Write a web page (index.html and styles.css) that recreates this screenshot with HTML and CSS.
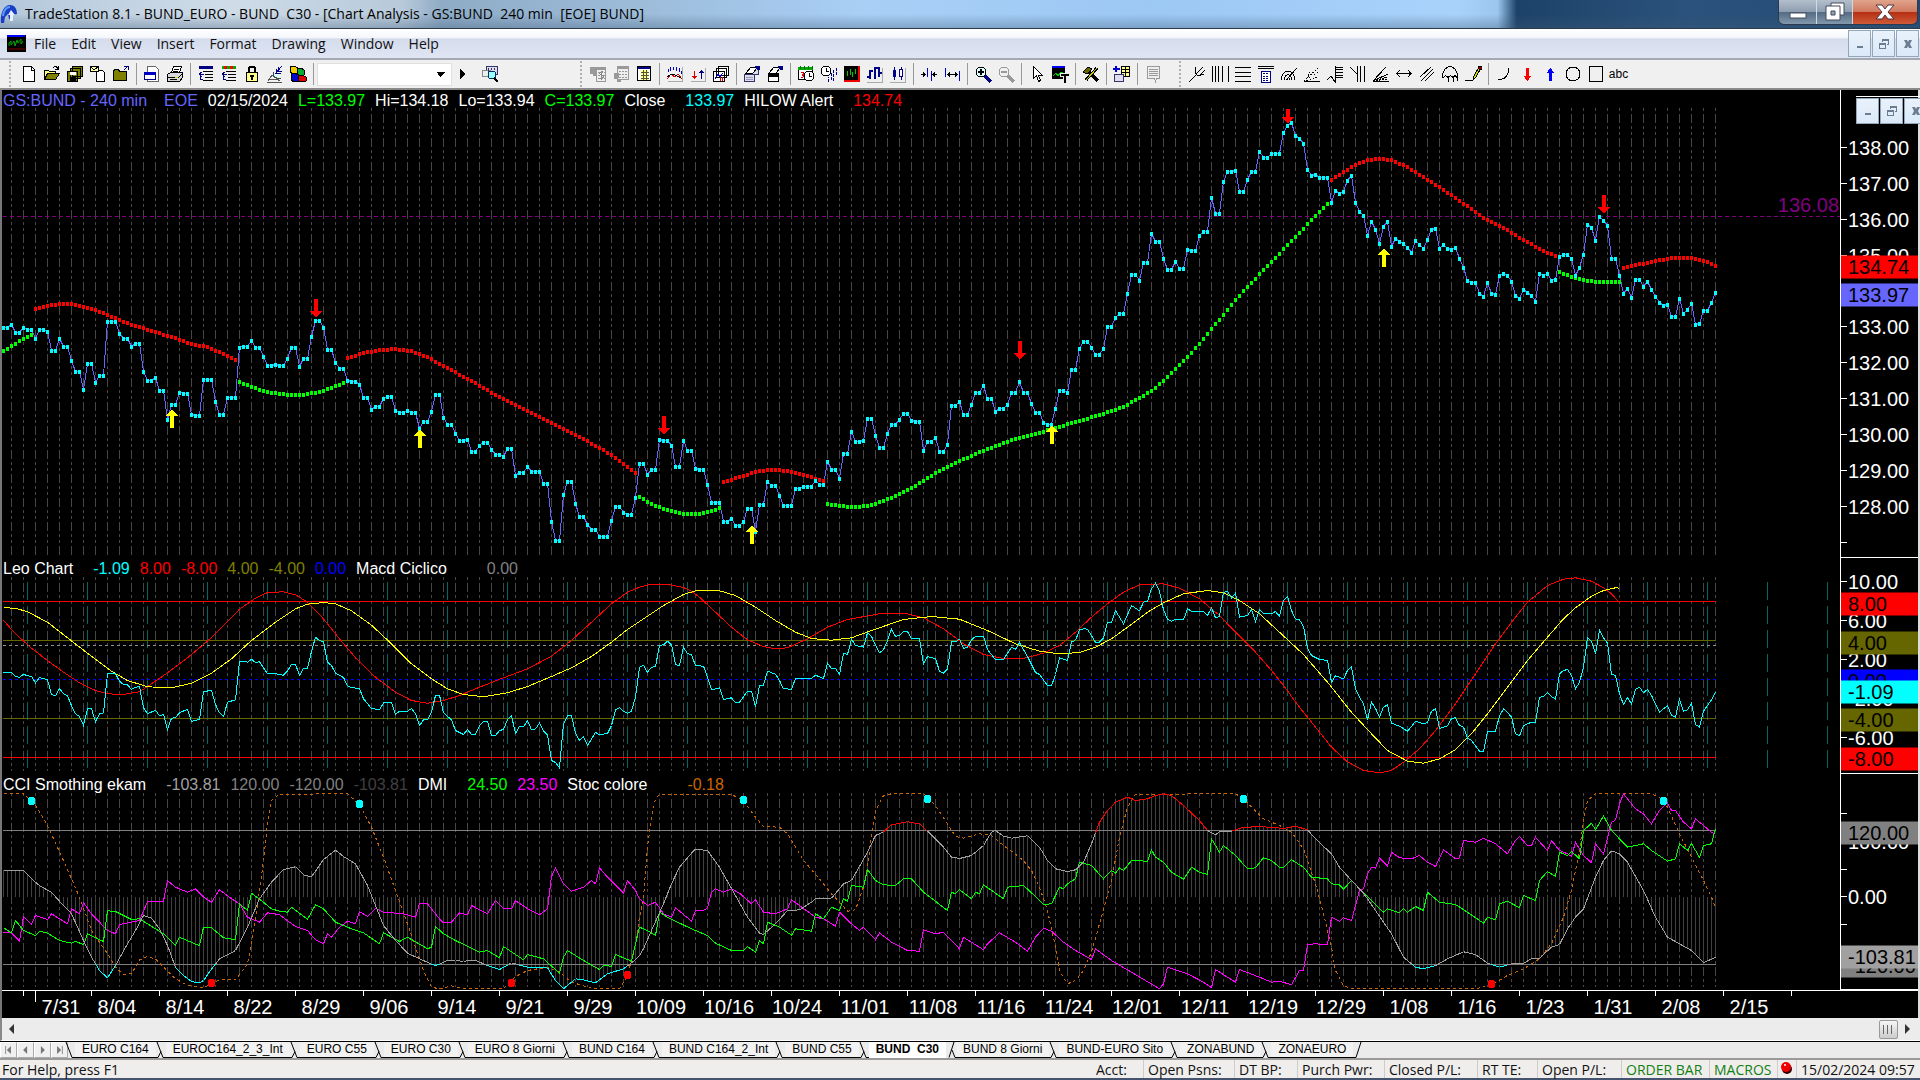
FILE: index.html
```html
<!DOCTYPE html>
<html lang="en">
<head>
    <meta charset="UTF-8">
    <meta name="viewport" content="width=device-width, initial-scale=1.0">
    <title>TradeStation 8.1 - BUND_EURO</title>
    <link rel="stylesheet" href="styles.css">
</head>
<body>

<header class="titlebar">
    <svg class="app-logo" viewBox="0 0 18 20"><path d="M1 19C0 9 4 1 10 1c5 0 7 4 7 9l-4 1-1 5-3-1-1-5-3 3-1 6z" fill="#1a3fc4"/><path d="M3 12C4 5 7 3 10 3" stroke="#5f9bff" stroke-width="2" fill="none"/><path d="M11 6l4 5h-2v6h-3v-6H8z" fill="#e8f0ff"/></svg>
    <h1 class="title">TradeStation 8.1 - BUND_EURO - BUND&nbsp; C30 - [Chart Analysis - GS:BUND&nbsp; 240 min&nbsp; [EOE] BUND]</h1>
    <div class="caption-buttons">
        <button class="cap cap-min" aria-label="Minimize"><svg viewBox="0 0 20 20"><rect x="2" y="11" width="16" height="5" fill="#fff" stroke="#444b5c"/></svg></button>
        <button class="cap cap-max" aria-label="Restore"><svg viewBox="0 0 20 20"><path d="M6 1h13v12H6z" fill="#fff" stroke="#444b5c"/><path d="M1 4h14v14H1z" fill="#fff" stroke="#444b5c"/><path d="M6 9h4v4H6z" fill="#8ea3b5" stroke="#444b5c"/></svg></button>
        <button class="cap cap-close" aria-label="Close"><svg viewBox="0 0 20 20"><path d="M1 3h6l3 4 3-4h6l-6 7 6 7h-6l-3-4-3 4H1l6-7z" fill="#fff" stroke="#4a3540"/></svg></button>
    </div>
</header>

<nav class="menubar">
    <svg class="doc-icon" viewBox="0 0 19 17"><path d="M0 0h19v17H0z" fill="#000"/><path d="M0 0h18v2H0z" fill="#00f"/><path d="M1 14h17" stroke="#800"/><path d="M2 11V8l2-2v4l3-4 1 5 2-6 1 3 3-4v5l2-3" stroke="#0a0" fill="none"/></svg>
    <a href="#">File</a>
    <a href="#">Edit</a>
    <a href="#">View</a>
    <a href="#">Insert</a>
    <a href="#">Format</a>
    <a href="#">Drawing</a>
    <a href="#">Window</a>
    <a href="#">Help</a>
    <div class="mdi">
        <button aria-label="Minimize chart"><svg viewBox="0 0 10 10"><path d="M2 7h6v2H2z"/></svg></button>
        <button aria-label="Restore chart"><svg viewBox="0 0 10 10"><path d="M3 0h7v6H8V5h1V2H4v1H3zM0 4h7v6H0zM1 6v3h5V6z" fill-rule="evenodd"/></svg></button>
        <button aria-label="Close chart"><svg viewBox="0 0 10 10"><path d="M1 1h3l1 2 1-2h3L7 5l2 4H6L5 7 4 9H1l2-4z"/></svg></button>
    </div>
</nav>

<div class="toolbar">
    <i class="grip"></i>
    <button aria-label="New"><svg viewBox="0 0 18 18"><path d="M3.5 1.5h8l3 3v12h-11z" fill="#fff" stroke="#000"/><path d="M11 2v3h3" stroke="#000" fill="none"/></svg></button>
    <button aria-label="Open"><svg viewBox="0 0 18 18"><path d="M1.5 14.5v-9h4l1 1h6v2" fill="#ffff80" stroke="#000"/><path d="M1.5 14.5l3-6h12l-4 6z" fill="#808000" stroke="#000"/><path d="M10 3c2-2 4-2 5 1M15 1v3h-3" stroke="#000" fill="none"/></svg></button>
    <button aria-label="Save all"><svg viewBox="0 0 18 18"><path d="M6.5 1.5h10v10h-10zM4.5 3.5h10v10h-10zM1.5 6.5h10v10h-10z" fill="#808000" stroke="#000"/><path d="M4 7h6v3H4z" fill="#fff"/><path d="M4 12h6v4H4z" fill="#000"/></svg></button>
    <button aria-label="Import"><svg viewBox="0 0 18 18"><path d="M7.5 5.5h6l2 2v9h-8z" fill="#fff" stroke="#000"/><path d="M1.5 1.5h8v5h-8z" fill="#ffffb0" stroke="#000"/><path d="M2 2l3 3 4-3" stroke="#000" fill="none"/></svg></button>
    <button aria-label="Close workspace"><svg viewBox="0 0 18 18"><path d="M1.5 15.5v-9l1-2h4l1 2h7v9z" fill="#808000" stroke="#000"/><path d="M16 5V1h-4M16 1l-4 4" stroke="#000080" fill="none"/></svg></button>
    <i class="sep"></i>
    <button aria-label="New window"><svg viewBox="0 0 18 18"><path d="M4.5 1.5h8l3 3v12h-11z" fill="#fff" stroke="#666"/><path d="M1.5 7.5h11v7h-11z" fill="#fff" stroke="#000080"/><path d="M1 7h12v3H1z" fill="#0000c0"/></svg></button>
    <button aria-label="Print"><svg viewBox="0 0 18 18"><path d="M5.5 7.5l2-6h8l-2 6z" fill="#fff" stroke="#000"/><path d="M1.5 9.5l3-2h12v5l-3 4h-12z" fill="#d8d8d8" stroke="#000"/><path d="M2 12h11l3-3M4 14h7M8 4h5M7 6h5" stroke="#000" fill="none"/><path d="M9 12h3v1H9z" fill="#dd0"/></svg></button>
    <i class="sep"></i>
    <button aria-label="Symbol list"><svg viewBox="0 0 18 18"><path d="M2 1h14v3H2z" fill="#000080"/><path d="M6 6.5h10M8 9.5h8M8 12.5h8M6 15.5h10" stroke="#000"/><path d="M7 9H3v5h3M5 7L2 9l3 3" stroke="#000080" fill="none"/></svg></button>
    <button aria-label="Strategy list"><svg viewBox="0 0 18 18"><path d="M2 1h14v3H2z" fill="#0a0"/><path d="M4 1h3v3H4zM10 1h3v3h-3z" fill="#f00"/><path d="M6 6.5h10M8 9.5h8M8 12.5h8M6 15.5h10" stroke="#000"/><path d="M7 9H3v5h3M5 7L2 9l3 3" stroke="#000080" fill="none"/></svg></button>
    <button aria-label="Lock"><svg viewBox="0 0 18 18"><path d="M6 8V4c0-3 6-3 6 0v4" fill="none" stroke="#000" stroke-width="2"/><path d="M3.5 7.5h11v9h-11z" fill="#ff8" stroke="#000"/><path d="M7 10h4v2H7zM8 12h2v3H8z" fill="#000"/></svg></button>
    <button aria-label="Satellite"><svg viewBox="0 0 18 18"><path d="M2 16l4-6 8 6M4 14h9M1 17h15" stroke="#555" fill="none"/><path d="M7 7c0 6 5 7 8 6" fill="#cff" stroke="#444"/><path d="M9 9l7-8M12 2v4h4M10 4v4h5" stroke="#008" fill="none"/></svg></button>
    <button aria-label="Blocks"><svg viewBox="0 0 18 18"><path d="M1 2l4-1 4 2v5l-4 1-4-2z" fill="#ec0" stroke="#000"/><path d="M8 4l4-1 3 2v5l-4 1-3-2z" fill="#0a3" stroke="#000"/><path d="M2 9l4-1 3 2v6l-4 1-3-2z" fill="#00c" stroke="#000"/><path d="M9 11l4-1 4 2v4l-4 1-4-1z" fill="#d00" stroke="#000"/></svg></button>
    <i class="sep"></i>
    <select class="symbol-box" aria-label="Symbol"><option></option></select>
    <button class="go" aria-label="Go"><svg viewBox="0 0 6 10"><path d="M0 0l5 5-5 5z"/></svg></button>
    <button class="lookup" aria-label="Lookup"><svg viewBox="0 0 18 18"><path d="M5.5 1.5h11v8h-11z" fill="#dde" stroke="#336"/><path d="M1.5 5.5h8v6h-8z" fill="#eee" stroke="#888"/><path d="M7 3v5M10 3v2M13 3v2" stroke="#336"/><circle cx="11" cy="10" r="4" fill="#9ff" stroke="#036"/><path d="M13 13l4 4" stroke="#000" stroke-width="2"/></svg></button>
    <i class="grip grip-mid"></i>
    <button aria-label="Dollar grid" disabled><svg viewBox="0 0 18 18"><path d="M1 2h7v9H4V9H1z" fill="#999"/><path d="M7.5 2.5h9v14h-9z" fill="#eee" stroke="#999"/><path d="M7 2h10v3H7zM1 2h6v2H1z" fill="#999"/><path d="M9 7.5h7M9 10.5h7M9 13.5h7" stroke="#999" stroke-dasharray="2 1"/><path d="M14 7c-4-1-4 3-1 3s2 4-2 3M12.500 6v9" stroke="#888" fill="none"/></svg></button>
    <button aria-label="Time grid" disabled><svg viewBox="0 0 18 18"><path d="M2 8h7v9H5v-3H2z" fill="#999"/><path d="M5.5 1.5h11v13h-11z" fill="#eee" stroke="#999"/><path d="M5 1h12v3H5z" fill="#999"/><path d="M7 6.5h9M7 9.5h9M7 12.5h9" stroke="#999" stroke-dasharray="2 1"/><path d="M2 8h5v5H2z" fill="#999"/></svg></button>
    <button aria-label="Calendar"><svg viewBox="0 0 18 18"><path d="M2.5 1.5h13v14h-13z" fill="#fff" stroke="#000"/><path d="M3 2h12v2H3z" fill="#008"/><path d="M6 5h7v10H6z" fill="#ff8"/><path d="M6 7.5h8M6 10.5h8M6 13.5h8M8.5 5v10M11.5 5v10" stroke="#553"/></svg></button>
    <i class="sep"></i>
    <button aria-label="Indicator"><svg viewBox="0 0 18 18"><path d="M2 16.5h14.500V2" stroke="#aaa" fill="none"/><path d="M2.500 7V4M4.500 6V2M7.500 5V2M10.500 6V2M13.500 7V3M15.500 9V6" stroke="#00c"/><path d="M1 14l4-5 4 3 3-3 4 5" stroke="#d00" fill="none"/><path d="M1 12l5-3 3 1 6 3" stroke="#000" fill="none"/></svg></button>
    <button aria-label="Strategy"><svg viewBox="0 0 18 18"><path d="M2 16.5h14.500V3" stroke="#aaa" fill="none"/><path d="M5 6h1v5h2l-3 3-2-3h2z" fill="#d00"/><path d="M12 14h1V8h2l-3-3-2 3h2z" fill="#008"/></svg></button>
    <button aria-label="Workspaces"><svg viewBox="0 0 18 18"><path d="M6.5 1.5h10v9h-10zM4.5 3.5h10v9h-10zM1.5 6.5h11v10h-11z" fill="#fff" stroke="#000"/><path d="M3 14l3-5 2 3 3-4" stroke="#00c" fill="none"/><path d="M8.5 12v4M10.5 12v4" stroke="#d00"/></svg></button>
    <i class="sep"></i>
    <button aria-label="Format window"><svg viewBox="0 0 18 18"><path d="M8.5 3.5h7v6h-7zM1.5 9.5h10v7h-10z" fill="#dde" stroke="#336"/><path d="M3 8l5-6 6 1-4 5z" fill="#fff" stroke="#000"/><path d="M12 1h5v4h-3" fill="#008"/><path d="M3 12.5h7M3 14.5h7" stroke="#99b"/></svg></button>
    <button aria-label="Format chart"><svg viewBox="0 0 18 18"><path d="M2.5 8.5h10v8h-10z" fill="#fff" stroke="#000"/><path d="M3 9h10v3H3z" fill="#000"/><path d="M3 8l5-6 6 1-4 5z" fill="#fff" stroke="#000"/><path d="M12 1h5v4h-3" fill="#008"/></svg></button>
    <i class="sep"></i>
    <button aria-label="Sessions"><svg viewBox="0 0 18 18"><path d="M1.5 3.5h14v11h-14z" fill="#fff" stroke="#000"/><path d="M1 2h15v3H1z" fill="#0a0"/><path d="M3.5 1v3M7.5 1v3M11.5 1v3M15.5 1v3" stroke="#060"/><path d="M4 8c3-2 3 2 1 2 3 0 2 3-1 2" stroke="#d00" fill="none"/><circle cx="12" cy="11" r="5" fill="#fff" stroke="#000"/><path d="M12 8v3h3" stroke="#000" fill="none"/></svg></button>
    <button aria-label="Time bars"><svg viewBox="0 0 18 18"><circle cx="6" cy="6" r="5" fill="#fff" stroke="#000"/><path d="M6 3v3h3" stroke="#000" fill="none"/><path d="M8.5 17v-5M11.5 15V8M13.5 16V5M16.5 10V3" stroke="#008" stroke-dasharray="3 1"/></svg></button>
    <button aria-label="Chart colours"><svg viewBox="0 0 18 18"><path d="M1 1h15v15H1z"/><path d="M4.500 11V6M7.500 10V4M9.500 12V7M12.500 9V4" stroke="#0c0"/><path d="M16 1v15H1" stroke="#e00" stroke-width="2" fill="none"/></svg></button>
    <button aria-label="OHLC bars"><svg viewBox="0 0 18 18"><path d="M1 17h15V3" stroke="#aaa" fill="none"/><path d="M4 14V5M1 12h3M4 6h3M9 14V2M9 3h4v9M13 8h3" stroke="#008" stroke-width="2" fill="none"/></svg></button>
    <button aria-label="Candles"><svg viewBox="0 0 18 18"><path d="M1 17h15V3" stroke="#aaa" fill="none"/><path d="M5.500 2v13M12 2v13" stroke="#008"/><path d="M4 5h3v7H4z" fill="#008"/><path d="M10.5 4.5h3v7h-3z" fill="#fff" stroke="#008"/></svg></button>
    <i class="sep"></i>
    <button aria-label="Decrease spacing"><svg viewBox="0 0 18 18"><path d="M7.5 3v9M11.5 6v10" stroke="#00c"/><path d="M1 9.5h4M17 9.5h-4" stroke="#000"/><path d="M3 7l3 2.500-3 2.500zM15 7l-3 2.500 3 2.500z"/></svg></button>
    <button aria-label="Increase spacing"><svg viewBox="0 0 18 18"><path d="M2.5 3v9M16.5 6v10" stroke="#00c"/><path d="M5 9.5h9" stroke="#000"/><path d="M7 7L4 9.500l3 2.500zM12 7l3 2.500-3 2.500z"/></svg></button>
    <i class="sep"></i>
    <button aria-label="Zoom in"><svg viewBox="0 0 18 18"><circle cx="7" cy="7" r="5" fill="#dff" stroke="#000"/><path d="M4 7h6M7 4v6" stroke="#000" stroke-width="2"/><path d="M11 11l6 6" stroke="#000080" stroke-width="3"/></svg></button>
    <button aria-label="Zoom out" disabled><svg viewBox="0 0 18 18"><circle cx="7" cy="7" r="5" fill="none" stroke="#999"/><path d="M4 7h6" stroke="#999" stroke-width="2"/><path d="M11 11l6 6" stroke="#999" stroke-width="3"/></svg></button>
    <i class="sep"></i>
    <button aria-label="Pointer"><svg viewBox="0 0 18 18"><path d="M5.5 1.5v12l3-3 2 6 2-1-2-5h4z" fill="#fff" stroke="#000"/></svg></button>
    <button aria-label="Data tip"><svg viewBox="0 0 18 18"><path d="M1 1h13v13H1z"/><path d="M1 1h13v2H1z" fill="#00f"/><path d="M2 11l3-3 2 3 3-4 3 2" stroke="#0c0" fill="none"/><path d="M9 8h9v3h-3v7h-3v-7H9z" fill="#000" stroke="#eee"/></svg></button>
    <i class="sep"></i>
    <button aria-label="Tools"><svg viewBox="0 0 18 18"><path d="M15 3L4 15M5 5l11 11" stroke="#000" stroke-width="3"/><path d="M15 3L4 15" stroke="#cc0"/><path d="M1 7l5-5 4 2-5 5z" fill="#660" stroke="#000"/></svg></button>
    <i class="sep"></i>
    <button aria-label="Add"><svg viewBox="0 0 18 18"><path d="M8.5 1.5h8v10h-8z" fill="#ff8" stroke="#000"/><path d="M9 4.5h7M9 7.5h7M12.5 2v9" stroke="#000"/><path d="M1.5 9.5h9v7h-9z" fill="#dde" stroke="#336"/><path d="M0 4h7M3 1v6" stroke="#00c" stroke-width="2"/></svg></button>
    <i class="sep"></i>
    <button aria-label="Notes" disabled><svg viewBox="0 0 18 18"><path d="M3.5 1.5h12v12h-3l-1 3-1-3h-7z" fill="#eee" stroke="#999"/><path d="M5 4.5h9M5 6.5h9M5 8.5h9M5 10.5h9" stroke="#999"/></svg></button>
    <i class="grip grip-right"></i>
    <button aria-label="Pitchfork"><svg viewBox="0 0 18 18" class="line"><path d="M1 17l8-8M8 2l-1 6 3 3 6-2M8 9l7-7M11 11l6-6"/></svg></button>
    <button aria-label="Cycle lines"><svg viewBox="0 0 18 18" class="line"><path d="M1.5 1v16M4.5 1v16M7.5 1v16M11.5 1v16M17.5 1v16"/></svg></button>
    <button aria-label="Horizontal lines"><svg viewBox="0 0 18 18" class="line"><path d="M1 2.5h16M1 7.5h16M1 11.5h16M1 16.5h16"/></svg></button>
    <button aria-label="Calculator lines"><svg viewBox="0 0 18 18" class="line"><path d="M1 1.5h16M1 3.5h16"/><path d="M4.5 6.5h9v11h-9z" fill="#fff" stroke="#008"/><path d="M6 8.5h6M6 11.5h6M6 13.5h6M6 15.5h6" stroke="#008" stroke-dasharray="2 1"/></svg></button>
    <button aria-label="Speed arcs"><svg viewBox="0 0 18 18" class="line"><path d="M1 15c1-12 13-12 14 0M4 15c1-7 7-7 8 0M6 15L17 3M7 15c0-3 3-3 3 0"/></svg></button>
    <button aria-label="Gann fan"><svg viewBox="0 0 18 18" class="line"><path d="M1 16.5h16"/><path d="M1 16L16 2M1 16l15-9M1 16l15-4M3 16L8 5" stroke-dasharray="1 2"/></svg></button>
    <button aria-label="Retracement"><svg viewBox="0 0 18 18" class="line"><path d="M1 15l4-4 4 6V1M10 2.5h7M10 4.5h7M10 7.5h7M10 10.5h7M10 12.5h7"/></svg></button>
    <button aria-label="Time extension"><svg viewBox="0 0 18 18" class="line"><path d="M1 2l7 7V1M8.5 4v13M11.5 1v16M15.5 1v16"/></svg></button>
    <button aria-label="Fan"><svg viewBox="0 0 18 18" class="line"><path d="M1 16L14 2M1 16.5h16M1 16l15-7"/><path d="M1 16l15-4M1 16l15-2" stroke-dasharray="2 1"/></svg></button>
    <button aria-label="Extend"><svg viewBox="0 0 18 18" class="line"><path d="M2 8.5h14M5 5L2 8.5 5 12M13 5l3 3.5-3 3.5"/></svg></button>
    <button aria-label="Channels"><svg viewBox="0 0 18 18" class="line"><path d="M2 12L13 2M3 16L15 4M7 16l9-9"/></svg></button>
    <button aria-label="Cycle arc"><svg viewBox="0 0 18 18" class="line"><path d="M1 16C0-3 18-3 17 16M2 13c2-3 4-3 5 0 1-3 4-3 5 0 1-3 3-3 4 0M7 13v4M12 13v4"/></svg></button>
    <button aria-label="Pencil"><svg viewBox="0 0 18 18" class="line"><path d="M1 15.5h8"/><path d="M9 15l1-4 5-9 2 1-5 9z" fill="#dd0"/><path d="M14 1h4v3h-3z" fill="#800"/></svg></button>
    <i class="sep"></i>
    <button aria-label="Arc"><svg viewBox="0 0 18 18" class="line"><path d="M3 14.5c7 0 10-3 11-11"/></svg></button>
    <button aria-label="Down arrow"><svg viewBox="0 0 18 18"><path d="M8 3h3v8h2l-3 5h-1l-3-5h2z" fill="#f00"/></svg></button>
    <button aria-label="Up arrow"><svg viewBox="0 0 18 18"><path d="M8 16h3V8h2l-3-5H9L6 8h2z" fill="#00f"/></svg></button>
    <button aria-label="Ellipse"><svg viewBox="0 0 18 18" class="line"><circle cx="9" cy="9" r="7"/></svg></button>
    <button aria-label="Rectangle"><svg viewBox="0 0 18 18" class="line"><path d="M2.5 1.5h13v15h-13z"/></svg></button>
    <button class="text-tool" aria-label="Text">abc</button>
</div>

<main class="chart">
    <div class="mdi mdi-chart">
        <button aria-label="Minimize"><svg viewBox="0 0 10 10"><path d="M2 7h6v2H2z"/></svg></button>
        <button aria-label="Restore"><svg viewBox="0 0 10 10"><path d="M3 0h7v6H8V5h1V2H4v1H3zM0 4h7v6H0zM1 6v3h5V6z" fill-rule="evenodd"/></svg></button>
        <button aria-label="Close"><svg viewBox="0 0 10 10"><path d="M1 1h3l1 2 1-2h3L7 5l2 4H6L5 7 4 9H1l2-4z"/></svg></button>
    </div>

    <section class="panel">
        <div class="plot">
            <svg id="price" viewBox="0 0 1838 468" preserveAspectRatio="none"></svg>
            <p class="legend">
                <span class="violet">GS:BUND - 240 min</span>
                <span class="violet wide">EOE</span>
                <span>02/15/2024</span>
                <span class="lime">L=133.97</span>
                <span>Hi=134.18</span>
                <span>Lo=133.94</span>
                <span class="lime">C=133.97</span>
                <span>Close</span>
                <span class="cyan far">133.97</span>
                <span>HILOW Alert</span>
                <span class="red far">134.74</span>
            </p>
            <span class="level-label">136.08</span>
        </div>
        <div class="axis" id="priceAxis"></div>
    </section>

    <section class="panel">
        <div class="plot">
            <svg id="leo" viewBox="0 0 1838 216" preserveAspectRatio="none"></svg>
            <p class="legend">
                <span>Leo Chart</span>
                <span class="cyan far">-1.09</span>
                <span class="red">8.00</span>
                <span class="red">-8.00</span>
                <span class="olive">4.00</span>
                <span class="olive">-4.00</span>
                <span class="blue">0.00</span>
                <span>Macd Ciclico</span>
                <span class="gray farther">0.00</span>
            </p>
        </div>
        <div class="axis" id="leoAxis"></div>
    </section>

    <section class="panel">
        <div class="plot">
            <svg id="cci" viewBox="0 0 1838 216" preserveAspectRatio="none"></svg>
            <p class="legend">
                <span>CCI Smothing ekam</span>
                <span class="silver far">-103.81</span>
                <span class="gray">120.00</span>
                <span class="gray">-120.00</span>
                <span class="dim">-103.81</span>
                <span>DMI</span>
                <span class="lime far">24.50</span>
                <span class="magenta">23.50</span>
                <span>Stoc colore</span>
                <span class="orange farther">-0.18</span>
            </p>
        </div>
        <div class="axis" id="cciAxis"></div>
    </section>

    <div class="dates" id="dates"></div>
</main>

<div class="scrollbar">
    <button aria-label="Scroll left"><svg viewBox="0 0 6 10"><path d="M5 0v10L0 5z"/></svg></button>
    <span class="thumb"></span>
    <button aria-label="Scroll right"><svg viewBox="0 0 6 10"><path d="M0 0v10l5-5z"/></svg></button>
</div>

<nav class="tabs">
    <button class="tab-nav" aria-label="First"><svg viewBox="0 0 10 10"><path d="M1 0h1v10H1zM8 0v10L3 5z"/></svg></button>
    <button class="tab-nav" aria-label="Previous"><svg viewBox="0 0 10 10"><path d="M7 0v10L2 5z"/></svg></button>
    <button class="tab-nav" aria-label="Next"><svg viewBox="0 0 10 10"><path d="M3 0v10l5-5z"/></svg></button>
    <button class="tab-nav" aria-label="Last"><svg viewBox="0 0 10 10"><path d="M8 0h1v10H8zM2 0v10l5-5z"/></svg></button>
    <div class="tab-list" id="tabs"></div>
</nav>

<footer class="statusbar">
    <span class="help">For Help, press F1</span>
    <span class="cell w-acct">Acct:</span>
    <span class="cell w-psns">Open Psns:</span>
    <span class="cell w-dt">DT BP:</span>
    <span class="cell w-purch">Purch Pwr:</span>
    <span class="cell w-closed">Closed P/L:</span>
    <span class="cell w-rt">RT TE:</span>
    <span class="cell w-open">Open P/L:</span>
    <span class="cell on w-order">ORDER BAR</span>
    <span class="cell on w-macros">MACROS</span>
    <span class="cell w-ball"><svg viewBox="0 0 14 14"><circle cx="7" cy="8" r="5" fill="#300"/><circle cx="6" cy="6" r="5" fill="#e00"/><circle cx="5" cy="4" r="1" fill="#fff"/></svg></span>
    <span class="cell w-clock">15/02/2024 09:57</span>
</footer>

<script src="chart.js"></script>
</body>
</html>
```
FILE: styles.css
```css
* {
    box-sizing: border-box;
}

body {
    margin: 0;
    min-height: 100vh;
    display: flex;
    flex-direction: column;
    background: #f0f0f0;
    font-family: "Open Sans", "Noto Sans", sans-serif;
    font-size: 14px;
    color: #111;
    overflow: hidden;
}

button {
    padding: 0;
    border: 0;
    background: none;
    display: flex;
    align-items: center;
    justify-content: center;
}

/* title bar */
.titlebar {
    display: flex;
    align-items: center;
    height: 29px;
    padding-right: 2px;
    border-bottom: 1px solid #2d3a48;
    background:
        linear-gradient(180deg, rgba(255, 255, 255, 0) 50%, rgba(60, 90, 120, 0.35) 100%),
        linear-gradient(90deg, #b4c8dc 0, #cfdce8 12%, #b7c9da 21%, #8fabc6 23%, #9dbddb 34%, #a9cff6 45%, #9cc8f4 60%, #a9d2fb 76%, #9cc6ee 78%, #1d4269 79%, #2b527c 88%, #204872 100%);
}

.app-logo {
    width: 18px;
    height: 20px;
    margin-right: 7px;
}

.title {
    margin: 0;
    font-size: 14px;
    font-weight: 400;
    line-height: 30px;
    color: #000;
    white-space: nowrap;
}

.caption-buttons {
    display: flex;
    align-self: flex-start;
    height: 25px;
    margin-left: auto;
    border: 1px solid #2b3b4d;
    border-top: 0;
    border-radius: 0 0 6px 6px;
    overflow: hidden;
}

.cap {
    width: 38px;
    border-right: 1px solid #d0dae4;
    background: linear-gradient(180deg, #b3bfcc 0, #8f9fb0 48%, #526a83 50%, #8298ad 100%);
}

.cap svg {
    width: 20px;
    height: 20px;
}

.cap-max {
    width: 36px;
}

.cap-close {
    width: 64px;
    border-right: 0;
    background: linear-gradient(180deg, #e0a48c 0, #cf7a60 48%, #b52e12 50%, #cf5a38 100%);
}

/* menu bar */
.menubar {
    display: flex;
    align-items: center;
    height: 29px;
    padding-left: 7px;
    background: linear-gradient(180deg, #fff 0, #f4f6fb 30%, #d5dcec 34%, #dfe5f3 100%);
}

.doc-icon {
    width: 19px;
    height: 17px;
    margin-right: 8px;
}

.menubar a {
    margin-right: 15px;
    color: #111;
    text-decoration: none;
    line-height: 29px;
}

.mdi {
    display: flex;
    gap: 1px;
    align-self: stretch;
    margin-left: auto;
    padding: 1px 1px 1px 0;
}

.mdi button {
    width: 23px;
    border: 1px solid #93a7bb;
    background: linear-gradient(180deg, #e9f2fb, #dbe9f8);
}

.mdi svg {
    width: 10px;
    height: 10px;
    fill: #6b7d90;
}

/* toolbar */
.toolbar {
    display: flex;
    align-items: center;
    height: 32px;
    padding-left: 6px;
    border-top: 2px solid #a5a9b3;
    border-bottom: 2px solid #8a8a8a;
    background: #f0f0f0;
}

.toolbar button {
    width: 23px;
    height: 24px;
    flex: none;
}

.toolbar svg {
    width: 18px;
    height: 18px;
    shape-rendering: crispEdges;
}

.toolbar .line {
    fill: none;
    stroke: #000;
}

.sep {
    flex: none;
    width: 8px;
    height: 22px;
    border-left: 1px solid #999;
    margin-left: 4px;
    margin-right: -4px;
}

.grip {
    flex: none;
    width: 3px;
    height: 26px;
    margin: 0 5px 0 3px;
    border-left: 2px dotted #b0b0b0;
}

.symbol-box {
    appearance: none;
    flex: none;
    width: 135px;
    height: 23px;
    border: 1px solid #e0e0e0;
    border-radius: 0;
    background:
        linear-gradient(45deg, transparent 50%, #000 50%) right 10px center / 5px 5px no-repeat,
        linear-gradient(315deg, transparent 50%, #000 50%) right 5px center / 5px 5px no-repeat,
        #fff;
}

.toolbar .go {
    width: 21px;
}

.toolbar .go svg {
    width: 6px;
    height: 10px;
}

.toolbar .lookup {
    margin-left: 5px;
}

.grip-mid {
    margin-left: 79px;
    margin-right: 3px;
}

.grip-right {
    margin-left: 15px;
    margin-right: 3px;
}

.toolbar .text-tool {
    font: 12px "Liberation Sans", sans-serif;
}

/* chart */
.chart {
    position: relative;
    flex: 1;
    display: grid;
    grid-template-rows: 13fr 6fr 6fr 28px;
    border-left: 2px solid #777;
    border-right: 2px solid #ddd;
    background: #000;
    color: #fff;
    font-family: "Liberation Sans", Arial, sans-serif;
}

.mdi-chart {
    position: absolute;
    z-index: 3;
    top: 6px;
    right: -10px;
    height: 29px;
    border-top: 1px solid #fff;
}

.panel {
    display: flex;
    min-height: 0;
}

.plot {
    position: relative;
    flex: 1;
    min-width: 0;
}

.plot > svg {
    position: absolute;
    width: 100%;
    height: 100%;
    shape-rendering: crispEdges;
    fill: none;
    overflow: visible;
}

.legend {
    position: relative;
    display: flex;
    gap: 10px;
    margin: 0;
    padding: 2px 0 0 1px;
    font-size: 16px;
    line-height: 18px;
    white-space: nowrap;
}

.legend .wide { margin-left: 7px; }
.legend .far { margin-left: 10px; }
.legend .farther { margin-left: 30px; }

.violet { color: #6666ff; }
.lime { color: #00ff00; }
.cyan { color: #00ffff; }
.red { color: #ff0000; }
.olive { color: #808000; }
.blue { color: #0000ff; }
.gray { color: #808080; }
.silver { color: #a0a0a0; }
.dim { color: #404040; }
.magenta { color: #ff00ff; }
.orange { color: #cc6600; }

.level-label {
    position: absolute;
    right: 1px;
    top: 22%;
    font-size: 20px;
    line-height: 24px;
    color: #800080;
}

.axis {
    position: relative;
    width: 78px;
    border-left: 1px solid #fff;
    border-bottom: 1px solid #fff;
    overflow: hidden;
}

.tick {
    position: absolute;
    left: 0;
    width: 6px;
    border-top: 1px solid #fff;
}

.value {
    position: absolute;
    left: 7px;
    margin-top: 1px;
    font-size: 20px;
    line-height: 23px;
    transform: translateY(-50%);
}

.value.tag {
    left: 0;
    width: 100%;
    padding-left: 7px;
    margin-top: 3px;
    color: #000;
}

.dates {
    position: relative;
    display: flex;
    border-top: 1px solid #fff;
    font-size: 20px;
    line-height: 32px;
    padding-left: 21px;
    overflow: hidden;
}

.dates span {
    position: relative;
    flex: none;
    width: 68px;
    padding-right: 16px;
    text-align: center;
}

.dates span::before {
    content: "";
    position: absolute;
    left: 0;
    top: 0;
    height: 5px;
    border-left: 1px solid #fff;
}

.dates .edge {
    width: 12px;
    padding: 0;
}

.dates .month {
    width: 56px;
    padding-right: 4px;
}

.dates .month::before {
    height: 11px;
}

/* scroll bar and workspace tabs */
.scrollbar {
    display: flex;
    align-items: center;
    height: 23px;
    padding: 0 5px 0 2px;
    border-left: 2px solid #888;
    border-bottom: 1px solid #fff;
    background: #ececec;
}

.scrollbar button {
    width: 15px;
    height: 20px;
}

.scrollbar svg {
    width: 6px;
    height: 10px;
    fill: #333;
}

.thumb {
    width: 19px;
    height: 19px;
    margin-left: auto;
    margin-right: 2px;
    padding: 4px 3px;
    border: 1px solid #999;
    border-radius: 2px;
    background:
        linear-gradient(90deg, #666 1px, transparent 1px) 0 0 / 4px 9px repeat-x content-box,
        linear-gradient(180deg, #f6f6f6, #ccc);
}

.tabs {
    display: flex;
    height: 19px;
    border-top: 1px solid #000;
    border-bottom: 2px solid #999;
    background: #ebebeb;
    font: 12px "Liberation Sans", Arial, sans-serif;
}

.tab-nav {
    width: 17px;
    border: 1px solid #aaa;
    border-top-color: #fff;
    border-left-color: #fff;
    background: #f0f0f0;
}

.tab-nav svg {
    width: 9px;
    height: 8px;
    fill: #777;
}

.tab-list {
    display: flex;
    margin-left: -3px;
}

.tab-list svg {
    width: 10px;
    height: 16px;
    flex: none;
}

.tab-list a {
    padding: 0 7px;
    border-bottom: 1px solid #000;
    color: #000;
    line-height: 15px;
    text-decoration: none;
    white-space: pre;
    background: #f2f2f2;
}

.tab-list .active {
    border-bottom-color: #fff;
    background: #fff;
    font-weight: 700;
}

/* status bar */
.statusbar {
    display: flex;
    height: 20px;
    border-bottom: 2px solid #44546e;
    background: #f0eeec;
    line-height: 20px;
    white-space: nowrap;
}

.help {
    flex: 1;
    padding-left: 2px;
}

.cell {
    padding-left: 4px;
    border-left: 1px solid #ccc;
}

.on {
    color: #138013;
}

.w-acct { width: 51px; border-left: 0; }
.w-psns { width: 91px; }
.w-dt { width: 63px; }
.w-purch { width: 87px; }
.w-closed { width: 93px; }
.w-rt { width: 60px; }
.w-open { width: 84px; }
.w-order { width: 88px; }
.w-macros { width: 68px; }
.w-ball { width: 19px; padding-left: 2px; }
.w-clock { width: 124px; }

.cell svg {
    width: 14px;
    height: 14px;
}
```
FILE: chart.js
```js
const NS = 'http://www.w3.org/2000/svg';
const BARS = 429;

// bar index -> x inside the plot
const barX = i => 1 + 4 * i;

function add(svg, tag, attrs) {
    const el = document.createElementNS(NS, tag);
    for (const key in attrs) el.setAttribute(key, attrs[key]);
    svg.appendChild(el);
    return el;
}

// "bar,y bar,y ..." -> [[bar, y], ...]
const parse = text => text.trim().split(/\s+/).map(p => p.split(',').map(Number));

// linear fill between the key bars
function fill(keys) {
    const out = [];
    for (let k = 0; k < keys.length - 1; k++) {
        const [a, ya] = keys[k];
        const [b, yb] = keys[k + 1];
        for (let i = a; i < b; i++) out.push([i, ya + (yb - ya) * (i - a) / (b - a)]);
    }
    out.push(keys[keys.length - 1]);
    return out;
}

function line(svg, pts, toY, attrs) {
    const d = pts.map(([i, v], n) => (n ? 'L' : 'M') + (barX(i) + 0.5) + ' ' + (toY(v) + 0.5).toFixed(1)).join('');
    add(svg, 'path', Object.assign({ d: d }, attrs));
}

function squares(svg, pts, toY, color, h) {
    const d = pts.map(([i, v]) => `M${barX(i) - 1} ${Math.round(toY(v)) - 1}h3v${h}h-3z`).join('');
    add(svg, 'path', { d: d, fill: color });
}

function grid(svg, top, bottom) {
    for (let i = 2; i < BARS; i += 3) {
        const x = barX(i) + 0.5;
        add(svg, 'path', { d: `M${x} ${top}V${bottom}`, stroke: '#464646', 'stroke-dasharray': '3 3 9 3 3 3' });
    }
}

function level(svg, y, color, dash, to) {
    add(svg, 'path', { d: `M1 ${y + 0.5}H${to || 1714}`, stroke: color, 'stroke-dasharray': dash || 'none' });
}

/* ---- price ---- */
const close = `
321 321 312 336 336 321 327 327 354 327 327 333 390 390 354 378 378 420 453 453
507 429 429 486 465 465 302 302 302 339 354 354 378 369 369 453 480 480 471 510
510 597 552 552 516 518 519 582 585 585 477 477 477 543 582 582 531 531 531 380
378 378 360 381 381 408 435 435 432 435 435 414 381 381 438 414 414 348 300 300
321 387 387 426 444 444 480 483 483 492 531 531 567 558 558 534 528 528 570 576
576 570 576 576 624 603 603 573 521 521 591 612 612 639 660 660 657 693 693 675
665 665 687 702 702 708 684 684 765 756 756 738 753 753 753 789 789 903 960 960
822 783 783 849 888 888 912 927 927 948 948 948 900 858 858 876 882 882 831 729
729 762 747 747 657 660 660 675 738 738 660 690 690 744 747 747 792 846 846 846
903 903 894 915 915 903 864 864 933 852 852 783 795 795 825 855 855 855 804 804
798 798 798 780 792 792 723 747 747 774 699 699 633 663 663 660 594 594 645 681
681 639 612 612 597 579 579 600 603 603 690 663 663 651 693 693 672 555 555 543
582 582 552 516 516 495 534 534 573 564 564 552 516 516 483 516 516 549 576 576
606 612 612 564 510 510 516 447 447 384 363 363 381 402 402 384 318 318 291 279
279 219 162 162 180 126 126 39 63 63 114 147 147 123 144 144 87 90 90 45
33 33 -69 -21 -21 -117 -147 -147 -150 -87 -87 -123 -147 -147 -207 -189 -189 -202 -202 -202
-264 -285 -294 -255 -246 -231 -153 -135 -138 -129 -129 -129 -54 -90 -81 -87 -120 -135 -54 -27
-15 45 3 27 69 18 3 78 54 63 69 81 96 60 72 84 57 27 24 84
72 84 87 81 114 141 180 186 186 219 228 186 219 222 165 159 165 183 225 234
207 216 225 243 159 165 159 180 177 108 102 102 114 165 141 102 12 21 60 -12
0 15 114 114 165 219 204 231 177 177 198 183 207 228 246 255 252 288 288 234
279 267 249 312 309 270 270 246 216`.trim().split(/\s+/).map((v, i) => [i, Number(v)]);

const alertHigh = [
    '8,264 11,254 14,249 17,249 20,258 23,267 26,282 29,297 33,315 38,333 42,348 47,369 51,378 55,399 58,418',
    '86,411 90,396 94,387 98,384 102,390 106,408 110,435 117,480 123,522 131,570 140,624 146,661 152,702 158,756',
    '180,783 184,768 188,753 192,746 196,750 200,762 205,780',
    '332,-123 335,-147 338,-168 341,-183 344,-187 347,-182 351,-162 355,-132 360,-93 365,-52 370,-10 375,20 380,57 385,90 388,105',
    '405,141 409,130 413,120 418,110 422,111 425,119 428,135'
];
const alertLow = [
    '0,390 2,375 5,354 7,342',
    '59,483 62,498 66,513 71,522 75,521 79,513 82,501 85,486',
    '159,828 162,850 166,867 170,879 174,879 177,870 179,861',
    '206,849 209,855 213,858 217,853 222,831 228,795 233,756 239,720 246,684 252,657 258,639 263,621 268,603 274,582 280,558 285,524 288,501 291,468 294,432 297,396 302,325 308,237 314,160 320,85 326,10 331,-50',
    '389,153 392,168 396,180 400,183 404,183'
];

const price = document.getElementById('price');
const priceY = v => v / 3 + 130;

grid(price, 18, 465);
level(price, 126, '#800080', '4 3', 1838);
line(price, close, priceY, { stroke: '#6666ff' });
alertHigh.forEach(s => squares(price, fill(parse(s)), priceY, '#ff0000', 4));
alertLow.forEach(s => squares(price, fill(parse(s)), priceY, '#00ff00', 4));
squares(price, close, priceY, '#00ffff', 4);

[[78, 237], [165, 588], [254, 363], [321, -345], [400, -75]].forEach(([i, v]) => {
    const x = barX(i), y = Math.max(Math.round(priceY(v)), 19);
    const tip = Math.round(priceY(v)) + 19;
    add(price, 'path', { d: `M${x - 1} ${y}h4V${tip - 7}h4l-6 7-6-7h4z`, fill: '#ff0000' });
});
[[42, 568], [104, 627], [187, 915], [262, 615], [345, 85]].forEach(([i, v]) => {
    const x = barX(i), y = Math.round(priceY(v));
    add(price, 'path', { d: `M${x - 1} ${y + 19}h4V${y + 7}h4l-6-7-6 7h4z`, fill: '#ffff00' });
});

/* ---- Leo Chart / Macd Ciclico ---- */
const leo = document.getElementById('leo');
const leoY = v => v / 3 - 8;

grid(leo, 19, 213);
for (let x = 25; x < 1838; x += 60) {
    add(leo, 'path', { d: `M${x + 0.5} 24V210`, stroke: '#006666', 'stroke-dasharray': '18 6' });
}
level(leo, 43, '#ff0000');
level(leo, 82, '#666600');
level(leo, 87, '#909090', '3 3');
level(leo, 121, '#0000ff', '3 3');
level(leo, 160, '#666600');
level(leo, 199, '#ff0000');

line(leo, parse(`
0,210 3,250 7,293 11,330 15,365 19,397 23,420 26,430 30,432 34,424 37,400 41,367 46,322 51,272 55,225
59,176 63,143 66,126 70,124 73,133 76,155 80,205 84,265 88,322 93,380 98,425 102,450 106,458 110,450 114,435
119,410 125,382 131,355 137,317 142,270 147,215 152,160 156,125 159,110 162,101 166,101 170,111 172,122 174,140
178,185 182,230 186,268 190,288 193,295 196,292 201,265 206,230 211,207 219,190 226,190 230,202 235,235 240,280
245,312 250,324 255,324 260,308 264,285 268,245 272,200 276,160 280,125 284,103 290,100 294,113 299,145 304,195
308,245 313,305 317,360 320,405 324,470 328,530 332,590 336,634 340,660 344,667 347,660 350,635 354,595 358,540
363,460 368,370 373,280 378,200 381,155 386,105 390,86 393,82 397,92 400,112 402,130 404,157`), leoY, { stroke: '#ff0000' });

line(leo, parse(`
0,172 3,173 6,184 11,215 16,262 21,308 27,362 31,390 36,409 42,412 47,398 52,368 57,325 62,270 68,215 73,175
76,161 80,156 83,160 87,181 92,224 97,280 102,340 107,385 111,415 115,432 120,439 126,427 131,408 137,378
142,352 147,318 152,275 156,237 160,205 165,165 170,132 173,121 179,121 183,135 188,170 193,210 198,245 202,264
207,269 212,262 217,240 225,207 232,198 239,206 246,240 253,280 259,302 264,310 269,306 273,290 277,265 281,230
286,185 290,157 295,130 301,120 305,127 309,150 314,190 319,245 325,312 331,395 337,485 342,550 346,600 351,632
355,638 359,625 363,598 367,550 371,490 376,410 381,330 386,260 390,205 393,172 397,137 400,120 403,112 404,113`), leoY, { stroke: '#ffff00' });

line(leo, parse(`
0,367 2,365 3,378 4,380 5,371 6,376 7,378 8,397 9,381 11,388 12,432 13,436 14,414 15,430 16,436 17,466 18,490
19,498 20,525 21,475 22,475 23,513 24,490 25,487 26,370 28,370 29,392 30,402 31,403 32,417 33,410 34,408 35,472
36,490 38,479 39,496 40,492 41,537 42,503 43,502 44,487 46,476 47,513 49,506 50,424 52,419 53,462 54,487 55,498
56,455 58,448 59,332 60,332 61,335 62,326 63,336 64,334 65,352 66,370 68,370 70,374 71,362 72,341 73,341 74,375
75,353 76,353 77,303 78,260 79,270 80,274 81,335 82,345 83,368 85,381 86,406 87,411 89,415 90,445 92,474 94,478
95,457 97,455 98,491 99,482 101,482 102,474 103,490 104,525 105,508 106,508 107,484 108,435 109,434 110,487
112,508 113,540 115,552 116,537 117,552 118,552 119,526 120,512 121,512 122,555 123,555 124,540 125,537 126,508
127,496 128,549 129,527 130,529 131,510 132,538 133,535 134,518 135,542 136,553 137,630 138,636 139,652 140,520
141,496 142,496 143,548 144,570 145,558 146,585 148,546 149,553 151,549 152,525 153,478 154,472 155,483 156,488
157,482 158,440 159,350 160,345 161,365 162,350 163,348 164,285 165,283 166,272 167,283 168,343 169,345 170,290
171,310 172,312 173,345 175,347 176,380 177,418 179,412 180,447 182,442 183,457 184,455 186,422 187,422 188,470
189,405 190,404 191,362 193,371 194,390 195,415 197,416 198,384 202,383 203,374 205,384 206,338 207,354 208,354
209,372 210,308 211,312 212,266 213,285 215,290 216,247 217,258 218,284 219,307 220,298 221,270 222,236 223,258
224,254 225,243 226,243 227,265 229,264 230,341 231,318 233,325 234,362 235,368 236,355 237,274 238,274 239,266
240,294 241,290 242,268 243,258 245,257 246,297 248,328 250,327 252,290 253,297 254,276 256,318 258,366 259,372
261,405 262,406 263,372 264,322 266,330 267,274 268,270 269,238 270,235 271,236 273,275 274,275 275,262 276,216
277,216 278,180 280,220 282,165 284,181 285,155 286,152 287,115 288,98 289,122 290,178 291,206 292,213 293,206
295,208 296,175 297,182 300,184 301,195 302,172 303,202 304,198 305,126 306,122 307,143 308,128 309,200 311,195
312,178 313,213 314,177 315,188 317,190 318,183 319,198 320,150 321,138 322,180 323,205 324,208 325,228 326,292
327,315 329,327 331,330 332,395 333,376 335,385 336,360 337,349 338,416 339,440 340,460 341,508 342,455 343,474
344,500 345,470 346,463 347,518 349,527 351,542 352,528 353,512 355,520 356,516 357,482 358,475 359,534 361,526
362,504 363,502 364,525 365,530 366,563 367,570 369,602 370,604 371,542 373,542 374,496 375,475 376,486 377,500
378,550 379,556 380,525 382,515 383,517 384,440 385,438 386,427 387,438 388,446 389,370 390,360 391,357 392,375
393,415 394,395 395,350 396,262 397,272 398,310 399,238 400,262 401,278 402,372 403,374 404,430 405,462 406,442
407,460 408,416 409,410 410,427 411,417 412,435 413,460 414,485 416,465 417,495 418,500 419,446 420,482 421,478
422,458 423,522 424,530 425,482 427,448 428,424`), leoY, { stroke: '#00ffff' });

/* ---- CCI / DMI / Stoc ---- */
const cci = document.getElementById('cci');
const cciY = v => v / 3 - 4;

grid(cci, 19, 213);

const cciPts = fill(parse(`
0,299 5,299 7,325 9,345 12,366 14,392 17,430 20,510 22,560 24,600 26,622 28,585 31,520 33,480 35,435 37,443
39,475 41,525 43,590 45,615 47,633 49,637 50,630 52,596 54,565 58,540 61,470 64,385 67,335 70,297 73,289 75,313
77,319 80,267 83,239 85,258 88,280 91,345 95,465 98,510 101,548 104,565 108,586 111,570 115,572 118,570 121,585
124,597 127,577 131,590 136,592 138,630 140,655 143,625 145,628 148,637 151,610 155,595 158,568 159,555 160,535
162,480 165,400 167,340 169,290 172,248 173,236 176,240 179,290 183,375 186,440 189,488 190,492 193,460 196,420
199,418 202,395 203,385 207,383 210,340 212,330 216,245 218,195 220,184 222,163 226,154 229,160 231,182 233,205
235,230 237,260 239,264 242,255 245,225 247,185 248,180 250,197 252,203 256,196 259,230 261,270 263,295 266,303
268,298 270,275 272,220 274,155 276,120 278,95 281,80 283,90 286,85 288,75 290,70 292,75 295,105 299,150 301,180
303,193 304,184 307,182 310,170 314,169 317,170 320,174 323,167 326,178 328,205 332,250 334,290 337,330 340,368
343,420 347,490 350,560 353,590 355,595 358,585 361,565 365,544 368,552 371,578 374,590 377,580 380,578 382,565
384,563 387,530 389,522 391,475 393,440 395,415 398,320 400,270 402,241 404,250 406,275 410,360 413,440 416,500
419,520 422,540 425,577 428,560`));

// histogram from the zero line
add(cci, 'path', {
    d: cciPts.map(([i, v]) => `M${barX(i) + 0.5} 123V${cciY(v).toFixed(1)}`).join(''),
    stroke: '#404040'
});
level(cci, 56, '#808080');
level(cci, 190, '#808080');

line(cci, parse(`
0,70 5,70 8,105 11,165 15,270 19,380 22,480 26,550 28,590 30,612 32,610 34,568 36,558 38,566 40,590 43,625
46,645 50,652 52,640 54,628 58,628 61,580 63,450 64,360 65,270 66,160 67,90 69,71 86,70 89,102 92,170 95,260
98,360 101,460 103,530 105,600 107,650 109,655 112,646 115,654 125,655 128,618 131,600 136,590 139,605 142,635
147,653 154,655 156,615 158,520 159,440 160,380 161,230 162,140 163,85 164,71 182,72 185,90 188,140 190,168
194,170 196,190 200,270 204,325 207,370 209,395 211,422 213,418 215,350 216,290 217,190 218,120 220,75 222,70
230,70 233,105 236,160 238,198 240,203 244,190 247,195 250,225 252,242 255,270 257,300 259,350 261,420 263,530
264,600 266,640 268,630 270,600 272,545 274,460 277,330 279,200 281,110 283,71 308,70 310,85 312,110 315,145
319,165 322,185 325,235 328,340 330,430 332,530 333,600 335,645 337,655 368,655 372,643 376,615 380,595 384,565
387,520 390,440 392,360 394,240 395,150 396,90 398,70 412,70 414,80 416,110 419,190 422,260 425,330 427,380
428,412`), cciY, { stroke: '#cc6600', 'stroke-dasharray': '3 3' });

line(cci, parse(`
0,485 2,487 4,512 5,438 7,462 8,435 11,447 12,430 16,460 17,415 19,430 20,397 22,430 26,480 28,490 29,462
32,455 34,450 36,393 40,392 41,330 43,350 46,365 48,355 50,380 52,395 54,358 57,385 59,400 61,440 64,455 66,427
69,433 73,468 76,480 78,508 80,520 81,490 82,500 84,470 86,452 88,460 89,423 91,438 93,413 95,425 100,430
103,440 104,400 106,400 109,445 110,457 112,455 114,427 116,433 117,405 121,430 123,390 125,415 127,415 128,390
131,415 134,433 136,415 137,318 138,292 140,340 142,362 145,350 147,330 148,340 149,292 151,320 155,368 156,330
158,360 159,385 161,405 163,395 165,430 167,440 168,412 172,452 173,420 175,420 176,412 177,365 178,355 180,365
182,355 184,368 187,400 188,388 190,425 193,430 196,415 197,388 199,405 203,440 205,445 208,467 209,425 212,460
214,480 215,470 218,508 219,487 222,515 226,540 229,542 230,478 233,490 235,485 239,535 240,500 245,538 246,520
249,487 253,515 256,542 258,500 260,473 262,482 265,515 268,540 272,567 273,535 277,570 282,605 289,655 290,640
291,590 296,610 300,635 302,652 303,597 306,620 308,635 309,597 314,620 317,635 319,632 322,643 324,600 325,600
326,522 328,520 331,523 332,440 334,452 335,442 337,450 339,360 340,355 341,310 342,290 343,293 344,262 346,287
347,245 349,262 352,265 354,255 356,275 358,288 360,238 363,265 364,262 365,210 368,215 370,203 373,220 376,250
378,210 379,198 381,225 382,225 383,200 386,240 387,210 389,240 391,250 392,258 393,215 395,255 397,277 398,220
400,250 402,155 403,150 404,100 405,70 408,115 410,130 412,160 414,120 416,97 417,120 418,120 420,155 422,175
423,145 425,165 427,185 428,192`), cciY, { stroke: '#ff00ff' });

line(cci, parse(`
0,472 2,487 3,450 5,480 8,495 9,482 11,488 14,510 17,518 18,512 20,523 21,490 25,513 26,421 28,423 32,447
34,445 36,460 40,490 43,524 44,500 49,526 50,470 52,472 55,502 58,508 59,400 61,420 62,368 65,395 67,415 69,422
71,425 72,410 76,446 78,403 80,415 83,455 87,475 90,487 94,520 95,487 99,513 101,500 106,535 107,530 108,468
110,490 113,510 119,545 121,540 124,562 125,528 130,568 131,552 135,565 139,608 140,560 141,540 145,570 149,597
150,585 152,587 153,552 155,562 157,572 158,520 159,470 161,480 163,495 164,425 166,440 168,452 172,475 176,495
178,518 182,540 185,540 186,528 188,545 189,510 190,520 191,455 194,470 197,494 198,475 202,482 203,430 205,445
207,410 209,420 210,385 211,392 212,345 215,350 216,297 218,330 220,343 223,345 225,325 227,325 230,365 236,420
237,365 238,370 239,358 242,385 243,365 244,370 245,343 250,385 251,350 255,345 258,378 260,402 262,400 264,350
265,355 266,340 268,325 269,275 272,285 275,325 277,300 278,308 279,292 280,300 282,270 286,272 287,238 288,260
290,275 292,305 295,326 297,290 299,305 301,312 302,205 304,245 305,225 308,255 311,295 313,292 315,262 317,270
319,290 320,290 322,268 325,290 327,320 331,325 332,340 334,343 335,356 337,330 341,378 345,425 346,415 349,427
350,415 351,425 353,408 355,420 356,365 359,395 363,402 366,425 370,458 371,440 373,448 374,400 376,392 379,412
380,375 383,390 384,330 386,303 388,318 389,245 391,255 392,243 394,265 395,180 397,158 398,178 400,136 402,180
406,230 410,220 412,240 416,272 418,265 419,220 421,240 422,220 424,260 425,225 427,220 428,175`), cciY, { stroke: '#00ff00' });

// the CCI line changes colour beyond +120 / -120
for (let n = 1; n < cciPts.length; n++) {
    const mid = (cciPts[n - 1][1] + cciPts[n][1]) / 2;
    const color = mid < 181 ? '#ff0000' : mid > 583 ? '#00ffff' : '#a0a0a0';
    line(cci, [cciPts[n - 1], cciPts[n]], cciY, { stroke: color });
}

[[7, 93], [89, 102], [185, 90], [231, 87], [310, 87], [415, 93]].forEach(([i, v]) =>
    add(cci, 'circle', { cx: barX(i) + 0.5, cy: cciY(v), r: 4, fill: '#00ffff' }));
[[52, 639], [127, 639], [156, 615], [372, 642]].forEach(([i, v]) =>
    add(cci, 'circle', { cx: barX(i) + 0.5, cy: cciY(v), r: 4, fill: '#ff0000' }));

/* ---- axes ---- */
function axis(id, height, zero, perUnit, labels, ticks, tags) {
    const el = document.getElementById(id);
    const top = v => ((zero - v * perUnit) / height * 100).toFixed(2) + '%';
    let html = '';
    ticks.forEach(v => html += `<i class="tick" style="top:${top(v)}"></i>`);
    labels.forEach(v => html += `<span class="value" style="top:${top(v)}">${v.toFixed(2)}</span>`);
    tags.forEach(([v, color]) => html += `<span class="value tag" style="top:${top(v)};background:${color}">${v.toFixed(2)}</span>`);
    el.innerHTML = html;
}

const range = (from, to, step) => {
    const out = [];
    for (let v = from; v <= to; v += step) out.push(v);
    return out;
};

axis('priceAxis', 468, 5025, 36, range(128, 138, 1), range(127, 138, 1),
    [[134.74, '#ff0000'], [133.97, '#6666ff']]);
axis('leoAxis', 216, 121, 9.75, [10, 6, 2, -2, -6], [10, 6, 2, -2, -6],
    [[8, '#ff0000'], [4, '#666600'], [0, '#0000ff'], [-1.09, '#00ffff'], [-4, '#666600'], [-8, '#ff0000']]);
axis('cciAxis', 216, 123, 0.56, [100, 0], [150, 100, 50, 0, -50],
    [[120, '#808080'], [-120, '#808080'], [-103.81, '#a0a0a0']]);

/* ---- dates and workspace tabs ---- */
const dates = ['8/04', '8/14', '8/22', '8/29', '9/06', '9/14', '9/21', '9/29', '10/09', '10/16', '10/24', '11/01',
    '11/08', '11/16', '11/24', '12/01', '12/11', '12/19', '12/29', '1/08', '1/16', '1/23', '1/31', '2/08', '2/15', ''];
document.getElementById('dates').innerHTML =
    '<span class="edge"></span><span class="month">7/31</span>' + dates.map(d => `<span>${d}</span>`).join('');

const tabs = ['EURO C164', 'EUROC164_2_3_Int', 'EURO C55', 'EURO C30', 'EURO 8 Giorni', 'BUND C164', 'BUND C164_2_Int',
    'BUND C55', 'BUND  C30', 'BUND 8 Giorni', 'BUND-EURO Sito', 'ZONABUND', 'ZONAEURO'];
const active = 8;
const edge = d => `<svg viewBox="0 0 10 16"><path d="${d}" fill="none" stroke="#000"/></svg>`;
document.getElementById('tabs').innerHTML = tabs.map((t, i) => {
    const d = i === 0 ? 'M1 0l6 15.5h3' : i === active + 1 ? 'M8 0L3 15.5M6 8l3 7.5h1' : 'M1 0l6 15.5h3M0 15.5h2l3-6';
    return edge(d) + `<a href="#"${i === active ? ' class="active"' : ''}>${t}</a>`;
}).join('') + edge('M0 15.5h3l5-15.5');
```
